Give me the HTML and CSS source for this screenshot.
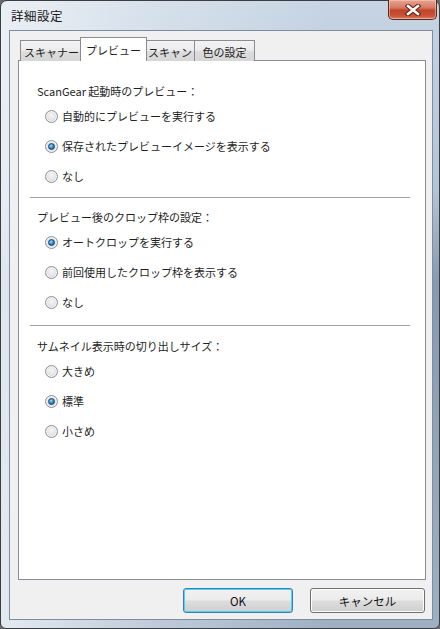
FILE: index.html
```html
<!DOCTYPE html>
<html lang="ja">
<head>
    <meta charset="UTF-8">
    <title>詳細設定</title>
    <link rel="stylesheet" href="styles.css">
</head>
<body>

<div class="window">
    <div class="titlebar">
        <span class="title">詳細設定</span>
        <div class="close-btn">
            <svg width="16" height="12" viewBox="0 0 16 12">
                <path d="M3 2 L13 10 M13 2 L3 10" stroke="#5a1a10" stroke-width="4.5" stroke-linecap="square"/>
                <path d="M3 2 L13 10 M13 2 L3 10" stroke="#ffffff" stroke-width="2.6" stroke-linecap="square"/>
            </svg>
        </div>
    </div>

    <div class="client">
        <div class="tabs">
            <div class="tab tab-scanner">スキャナー</div>
            <div class="tab tab-preview active">プレビュー</div>
            <div class="tab tab-scan">スキャン</div>
            <div class="tab tab-color">色の設定</div>
        </div>

        <div class="panel">
            <div class="section">
                <div class="heading">ScanGear 起動時のプレビュー：</div>
                <label class="option"><span class="radio"></span>自動的にプレビューを実行する</label>
                <label class="option"><span class="radio checked"></span>保存されたプレビューイメージを表示する</label>
                <label class="option"><span class="radio"></span>なし</label>
            </div>
            <div class="separator"></div>
            <div class="section">
                <div class="heading">プレビュー後のクロップ枠の設定：</div>
                <label class="option"><span class="radio checked"></span>オートクロップを実行する</label>
                <label class="option"><span class="radio"></span>前回使用したクロップ枠を表示する</label>
                <label class="option"><span class="radio"></span>なし</label>
            </div>
            <div class="separator sep-lower"></div>
            <div class="section">
                <div class="heading">サムネイル表示時の切り出しサイズ：</div>
                <label class="option"><span class="radio"></span>大きめ</label>
                <label class="option"><span class="radio checked"></span>標準</label>
                <label class="option"><span class="radio"></span>小さめ</label>
            </div>
        </div>

        <div class="buttons">
            <button class="btn btn-ok">OK</button>
            <button class="btn btn-cancel">キャンセル</button>
        </div>
    </div>
</div>

</body>
</html>
```

FILE: styles.css
```css
body {
    margin: 0;
    font-family: "Noto Sans CJK JP", "Noto Sans", sans-serif;
    font-size: 11px;
    color: #1e1e1e;
    background: #6b6b6b;
}
.window {
    width: 440px;
    height: 629px;
    box-sizing: border-box;
    border: 1px solid #3a3d42;
    border-radius: 7px 7px 6px 6px;
    padding: 0 6px 8px 8px;
    display: flex;
    flex-direction: column;
    background:
        linear-gradient(to right, rgba(240, 244, 248, 0.85) 0%, rgba(240, 244, 248, 0.4) 35%, rgba(255, 255, 255, 0) 75%),
        linear-gradient(to bottom, #c6d4e3 0%, #b3c4d7 30%, #8799ae 45%, #9fb0c4 100%);
}
.titlebar {
    height: 29px;
    display: flex;
    align-items: center;
    justify-content: space-between;
}
.title {
    margin-left: 2px;
    font-size: 12.5px;
    letter-spacing: 0.5px;
    color: #1a1a1a;
}
.close-btn {
    align-self: flex-start;
    width: 47px;
    height: 19px;
    margin-top: -1px;
    margin-right: -4px;
    border: 1px solid #5b2a22;
    border-top: none;
    border-radius: 0 0 5px 5px;
    display: flex;
    align-items: center;
    justify-content: center;
    background: linear-gradient(to bottom, #e6a595 0%, #d47a62 40%, #c2432b 55%, #c8553a 85%, #dc8a6c 100%);
    box-shadow: inset 0 0 0 1px rgba(255, 210, 190, 0.5);
}
.client {
    flex: 1;
    background: #f0f0f0;
    border: 1px solid #7d8c9e;
    padding: 7px 7px 5px 8px;
    display: flex;
    flex-direction: column;
}
.tabs {
    display: flex;
    align-items: flex-end;
    height: 23px;
    margin-left: 2px;
    position: relative;
    z-index: 1;
    margin-bottom: -1px;
}
.tab {
    box-sizing: border-box;
    height: 21px;
    border: 1px solid #898c95;
    border-bottom: none;
    margin-right: -1px;
    padding-top: 3px;
    text-align: center;
    background: linear-gradient(to bottom, #f3f3f3 0%, #ebebeb 50%, #dddddd 51%, #d6d6d6 100%);
    white-space: nowrap;
}
.tab-scanner { width: 63px; }
.tab-scan { width: 50px; }
.tab-color { width: 61px; }
.tab.active {
    height: 24px;
    padding-top: 4px;
    background: #ffffff;
    margin-left: -2px;
    margin-right: -2px;
    width: 67px;
    position: relative;
    z-index: 2;
}
.panel {
    width: 408px;
    height: 520px;
    box-sizing: border-box;
    background: #ffffff;
    border: 1px solid #898c95;
    padding-top: 20px;
}
.section {
    padding-left: 18px;
}
.heading {
    height: 20px;
    line-height: 20px;
}
.option {
    display: flex;
    align-items: center;
    height: 30px;
    margin-left: 8px;
}
.radio {
    width: 11px;
    height: 11px;
    border-radius: 50%;
    border: 1px solid #8c8f94;
    margin-right: 4px;
    background: radial-gradient(circle at 50% 40%, #f6f6f6 0%, #e4e4e4 50%, #cfcfcf 100%);
    box-shadow: inset 0 0 0 1px #f4f4f4;
    display: flex;
    align-items: center;
    justify-content: center;
}
.radio.checked::after {
    content: "";
    width: 5px;
    height: 5px;
    border-radius: 50%;
    border: 1px solid #17446f;
    background: radial-gradient(circle at 40% 35%, #9fdcff 0%, #3d8fd0 45%, #174f8a 100%);
}
.separator {
    height: 1px;
    background: #a0a0a0;
    margin: 6px 15px 9px 11px;
}
.sep-lower {
    margin-top: 8px;
    margin-bottom: 10px;
}
.buttons {
    display: flex;
    justify-content: flex-end;
    gap: 17px;
    margin-top: 8px;
}
.btn {
    height: 25px;
    box-sizing: border-box;
    border: 1px solid #707070;
    border-radius: 3px;
    font-family: inherit;
    font-size: 11.5px;
    color: #111;
    background: linear-gradient(to bottom, #f2f2f2 0%, #ebebeb 48%, #dddddd 52%, #cfcfcf 100%);
    box-shadow: inset 0 0 0 1px #fcfcfc;
    padding: 0;
}
.btn-ok {
    width: 110px;
    border-color: #3c7fb1;
    box-shadow: inset 0 0 0 1px #48d4f7;
}
.btn-cancel {
    width: 115px;
}
```
